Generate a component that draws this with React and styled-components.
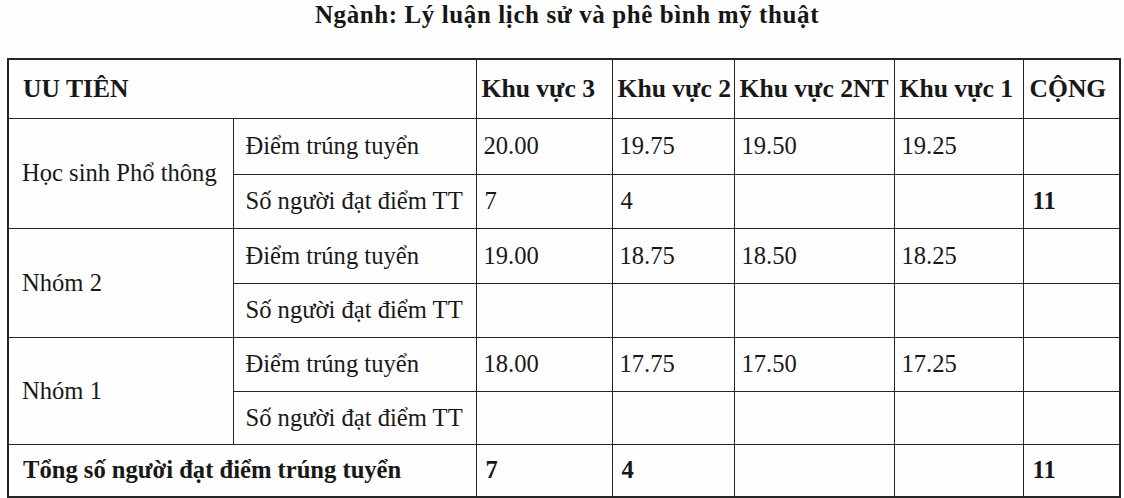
import React from "react";
import styled, { createGlobalStyle } from "styled-components";

const Global = createGlobalStyle`
  html, body { margin: 0; padding: 0; background: #ffffff; }
  body { font-family: "Liberation Serif", "Times New Roman", serif; color: #161616; }
`;

const Page = styled.div`
  width: 1124px;
  height: 498px;
  display: flex;
  flex-direction: column;
  align-items: flex-start;
  overflow: hidden;
  background: #fefefe;
`;

const Title = styled.h1`
  margin: 0;
  width: 100%;
  height: 58px;
  display: flex;
  justify-content: center;
  align-items: flex-start;
  padding: 0 0 0 10px;
  box-sizing: border-box;
  font-size: 25px;
  line-height: 29px;
  font-weight: 700;
  letter-spacing: 0.6px;
  color: #161616;
`;

const Table = styled.table`
  margin-left: 7px;
  width: 1112px;
  border-collapse: collapse;
  table-layout: fixed;
  border: 2px solid #262626;
  font-size: 24.6px;
  color: #181818;
`;

const HeadRow = styled.tr`
  height: 59px;
  font-size: 25.6px;
`;

const Row = styled.tr`
  height: ${(p) => p.$h || 54}px;
`;

const Cell = styled.td`
  border: 1.8px solid #262626;
  padding: 0 0 0 ${(p) => p.$pl ?? 7}px;
  font-weight: ${(p) => (p.$bold ? 700 : 400)};
  text-align: left;
  vertical-align: middle;
  white-space: nowrap;
  overflow: hidden;
  line-height: 28px;
`;

const Col = styled.col`
  width: ${(p) => p.$w}px;
`;

const cols = [225, 243, 136, 122, 160, 129, 97];
const areas = ["Khu vực 3", "Khu vực 2", "Khu vực 2NT", "Khu vực 1"];

const groups = [
  {
    name: "Học sinh Phổ thông",
    scores: ["20.00", "19.75", "19.50", "19.25"],
    counts: ["7", "4", "", ""],
    total: "11",
    heights: [56, 54],
  },
  {
    name: "Nhóm 2",
    scores: ["19.00", "18.75", "18.50", "18.25"],
    counts: ["", "", "", ""],
    total: "",
    heights: [55, 54],
  },
  {
    name: "Nhóm 1",
    scores: ["18.00", "17.75", "17.50", "17.25"],
    counts: ["", "", "", ""],
    total: "",
    heights: [54, 53],
  },
];

export default function App() {
  return (
    <>
      <Global />
      <Page>
        <Title>Ngành: Lý luận lịch sử và phê bình mỹ thuật</Title>
        <Table>
          <colgroup>
            {cols.map((w, i) => (
              <Col key={i} $w={w} />
            ))}
          </colgroup>
          <tbody>
            <HeadRow>
              <Cell colSpan={2} $bold $pl={14}>
                UU TIÊN
              </Cell>
              {areas.map((a) => (
                <Cell key={a} $bold $pl={5}>
                  {a}
                </Cell>
              ))}
              <Cell $bold $pl={6}>
                CỘNG
              </Cell>
            </HeadRow>
            {groups.map((g) => (
              <React.Fragment key={g.name}>
                <Row $h={g.heights[0]}>
                  <Cell rowSpan={2} $pl={13}>
                    {g.name}
                  </Cell>
                  <Cell $pl={12}>Điểm trúng tuyển</Cell>
                  {g.scores.map((s, i) => (
                    <Cell key={i} $pl={7}>
                      {s}
                    </Cell>
                  ))}
                  <Cell />
                </Row>
                <Row $h={g.heights[1]}>
                  <Cell $pl={12}>Số người đạt điểm TT</Cell>
                  {g.counts.map((c, i) => (
                    <Cell key={i} $pl={8}>
                      {c}
                    </Cell>
                  ))}
                  <Cell $bold $pl={9}>
                    {g.total}
                  </Cell>
                </Row>
              </React.Fragment>
            ))}
            <Row $h={53}>
              <Cell colSpan={2} $bold $pl={14}>
                Tổng số người đạt điểm trúng tuyển
              </Cell>
              <Cell $bold $pl={9}>7</Cell>
              <Cell $bold $pl={9}>4</Cell>
              <Cell />
              <Cell />
              <Cell $bold $pl={9}>11</Cell>
            </Row>
          </tbody>
        </Table>
      </Page>
    </>
  );
}
